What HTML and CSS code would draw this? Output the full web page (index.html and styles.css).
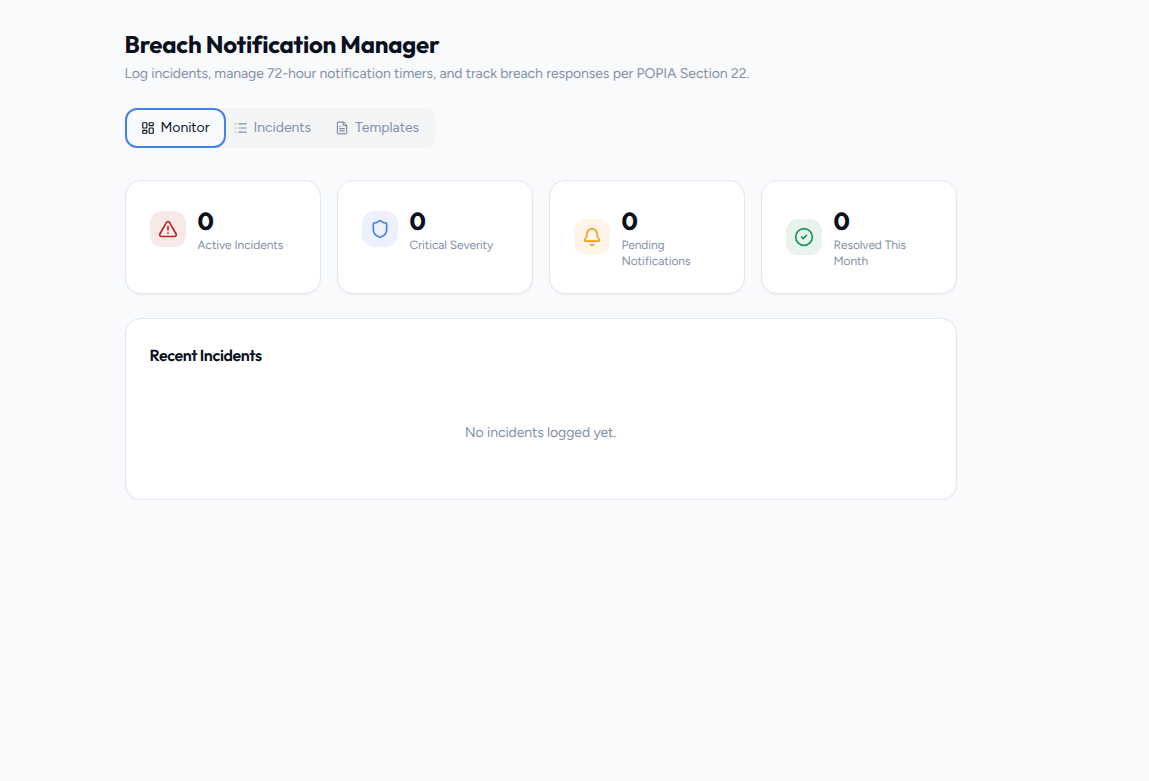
FILE: index.html
```html
<!DOCTYPE html>
<html lang="en">
<head>
    <meta charset="UTF-8">
    <meta name="viewport" content="width=device-width, initial-scale=1.0">
    <title>Breach Notification Manager</title>
    <link rel="stylesheet" href="styles.css">
</head>
<body>
    <main class="page">
        <header class="page-header">
            <h1>Breach Notification Manager</h1>
            <p>Log incidents, manage 72-hour notification timers, and track breach responses per POPIA Section 22.</p>
        </header>

        <nav class="tabs">
            <button class="tab active">
                <svg class="icon" viewBox="0 0 24 24"><rect width="7" height="9" x="3" y="3" rx="1"/><rect width="7" height="5" x="14" y="3" rx="1"/><rect width="7" height="9" x="14" y="12" rx="1"/><rect width="7" height="5" x="3" y="16" rx="1"/></svg>
                Monitor
            </button>
            <button class="tab">
                <svg class="icon" viewBox="0 0 24 24"><path d="M3 5h.01M3 12h.01M3 19h.01M8 5h13M8 12h13M8 19h13"/></svg>
                Incidents
            </button>
            <button class="tab">
                <svg class="icon" viewBox="0 0 24 24"><path d="M15 2H6a2 2 0 0 0-2 2v16a2 2 0 0 0 2 2h12a2 2 0 0 0 2-2V7Z"/><path d="M14 2v4a2 2 0 0 0 2 2h4M10 9H8M16 13H8M16 17H8"/></svg>
                Templates
            </button>
        </nav>

        <section class="stats">
            <div class="card">
                <div class="stat">
                    <div class="stat-icon red">
                        <svg class="icon" viewBox="0 0 24 24"><path d="m21.73 18-8-14a2 2 0 0 0-3.48 0l-8 14A2 2 0 0 0 4 21h16a2 2 0 0 0 1.73-3M12 9v4M12 17h.01"/></svg>
                    </div>
                    <div class="stat-text">
                        <div class="stat-value">0</div>
                        <div class="stat-label">Active Incidents</div>
                    </div>
                </div>
            </div>
            <div class="card">
                <div class="stat">
                    <div class="stat-icon blue">
                        <svg class="icon" viewBox="0 0 24 24"><path d="M20 13c0 5-3.5 7.5-7.66 8.95a1 1 0 0 1-.67-.01C7.5 20.5 4 18 4 13V6a1 1 0 0 1 1-1c2 0 4.5-1.2 6.24-2.72a1.17 1.17 0 0 1 1.52 0C14.51 3.81 17 5 19 5a1 1 0 0 1 1 1z"/></svg>
                    </div>
                    <div class="stat-text">
                        <div class="stat-value">0</div>
                        <div class="stat-label">Critical Severity</div>
                    </div>
                </div>
            </div>
            <div class="card">
                <div class="stat">
                    <div class="stat-icon orange">
                        <svg class="icon" viewBox="0 0 24 24"><path d="M10.268 21a2 2 0 0 0 3.464 0"/><path d="M3.262 15.326A1 1 0 0 0 4 17h16a1 1 0 0 0 .74-1.673C19.41 13.956 18 12.499 18 8A6 6 0 0 0 6 8c0 4.499-1.411 5.956-2.738 7.326"/></svg>
                    </div>
                    <div class="stat-text">
                        <div class="stat-value">0</div>
                        <div class="stat-label">Pending Notifications</div>
                    </div>
                </div>
            </div>
            <div class="card">
                <div class="stat">
                    <div class="stat-icon green">
                        <svg class="icon" viewBox="0 0 24 24"><circle cx="12" cy="12" r="10"/><path d="m9 12 2 2 4-4"/></svg>
                    </div>
                    <div class="stat-text">
                        <div class="stat-value">0</div>
                        <div class="stat-label">Resolved This Month</div>
                    </div>
                </div>
            </div>
        </section>

        <section class="card">
            <h2>Recent Incidents</h2>
            <p class="empty">No incidents logged yet.</p>
        </section>
    </main>
</body>
</html>
```
FILE: styles.css
```css
* {
    box-sizing: border-box;
}
body {
    font-family: Figtree, Lato, sans-serif;
    margin: 0;
    background-color: #f9fafc;
    color: #0a101e;
    letter-spacing: -0.08px;
    text-rendering: geometricPrecision;
}
h1, h2, p {
    margin: 0;
}
.page {
    width: 832px;
    margin: 28px 0 0 124.5px;
}
h1 {
    font-family: Outfit, Lato, sans-serif;
    font-size: 24px;
    line-height: 34px;
    font-weight: 700;
    letter-spacing: -0.01em;
}
.page-header p {
    margin-top: 2px;
    font-size: 14px;
    line-height: 20px;
    color: #8290a8;
}
.tabs {
    display: flex;
    width: 311px;
    height: 40px;
    margin: 24px 0 32px;
    border-radius: 12px;
    background-color: #f3f4f6;
}
.tab {
    display: flex;
    align-items: center;
    gap: 6px;
    padding: 0 8px;
    margin-right: 8px;
    border: none;
    background: none;
    font-family: inherit;
    font-size: 14px;
    font-weight: 450;
    line-height: 20px;
    letter-spacing: -0.04px;
    color: #8290a8;
    cursor: pointer;
}
.tab.active {
    width: 101px;
    padding: 0 14px;
    margin-right: 0;
    border: 2px solid #4580ef;
    border-radius: 12px;
    background-color: #f9fafc;
    color: #0a101e;
}
.icon {
    flex-shrink: 0;
    width: 14px;
    height: 14px;
    fill: none;
    stroke: currentColor;
    stroke-width: 2;
    stroke-linecap: round;
    stroke-linejoin: round;
}
.stats {
    display: grid;
    grid-template-columns: repeat(4, 1fr);
    gap: 16px;
    margin-bottom: 24px;
}
.card {
    padding: 24px;
    border: 1px solid #e3e8f0;
    border-radius: 16px;
    background-color: #fff;
    box-shadow: 0 1px 2px rgba(15, 23, 42, 0.05);
}
.stat {
    display: flex;
    align-items: center;
    gap: 12px;
}
.stat-icon {
    display: flex;
    flex-shrink: 0;
    align-items: center;
    justify-content: center;
    width: 36px;
    height: 36px;
    border-radius: 12px;
}
.stat-icon .icon {
    width: 20px;
    height: 20px;
}
.red {
    background-color: #f8e9e9;
    color: #bd2525;
}
.blue {
    background-color: #edf1fe;
    color: #4580ef;
}
.orange {
    background-color: #fff4e8;
    color: #f59e20;
}
.green {
    background-color: #e8f3ed;
    color: #1c935a;
}
.stat-value {
    height: 32px;
    font-size: 25px;
    font-weight: 800;
    line-height: 35px;
}
.stat-label {
    font-size: 12px;
    line-height: 16px;
    color: #8290a8;
}
h2 {
    height: 24px;
    font-family: Outfit, Lato, sans-serif;
    font-size: 16px;
    line-height: 26px;
    font-weight: 600;
    letter-spacing: -0.025em;
}
.empty {
    margin-top: 24px;
    padding: 32px 0;
    text-align: center;
    font-size: 14px;
    line-height: 20px;
    color: #8290a8;
}
```
